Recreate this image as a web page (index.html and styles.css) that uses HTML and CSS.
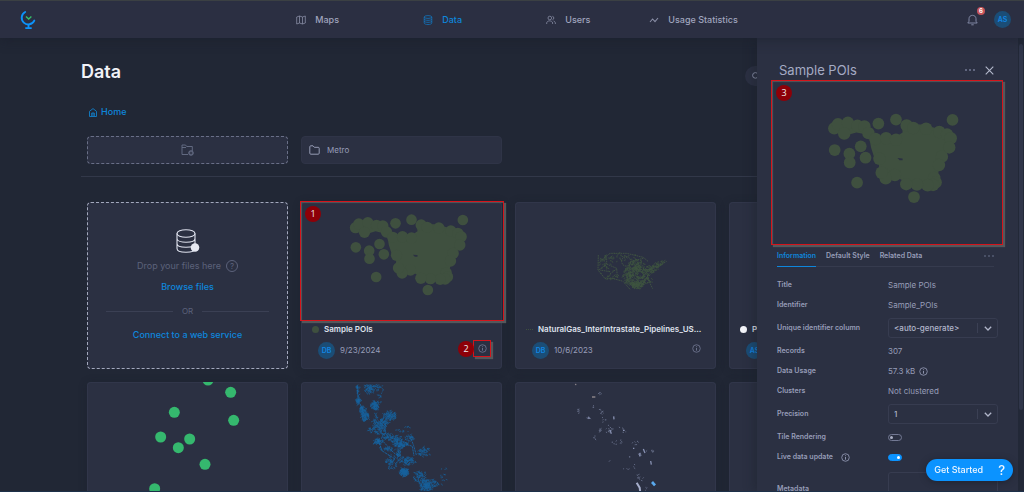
FILE: index.html
```html
<!DOCTYPE html>
<html lang="en">
<head>
<meta charset="utf-8">
<title>Data</title>
<link rel="stylesheet" href="styles.css">
</head>
<body>
<svg class="defs" aria-hidden="true">
  <defs>
    <symbol id="info" viewBox="0 0 10 10"><circle cx="5" cy="5" r="4.2" fill="none" stroke="currentColor" stroke-width=".9"/><path d="M5 4.4V7.4M5 2.6V3.5" stroke="currentColor" stroke-width="1"/></symbol>
    <g id="pois">
      <path d="M180 108L195 95L262 100L284 124L296 134L348 136L366 124L364 106L380 100L430 104L466 116L490 126L500 140L496 165L478 190L468 213L462 240L455 275L375 270L362 252L345 248L318 255L300 235L302 212L288 190L280 165L276 142L258 128L240 124L206 134L180 120ZM352 194L358 200L366 200L366 195Z" fill-rule="evenodd"/>
      <circle cx="180" cy="113" r="17"/><circle cx="190" cy="102" r="17"/><circle cx="217" cy="98" r="17"/><circle cx="207" cy="127" r="17"/><circle cx="243" cy="106" r="17"/><circle cx="262" cy="108" r="17"/><circle cx="273" cy="126" r="17"/><circle cx="252" cy="162" r="16"/><circle cx="265" cy="193" r="16"/><circle cx="292" cy="142" r="17"/><circle cx="321" cy="140" r="17"/><circle cx="348" cy="144" r="17"/><circle cx="377" cy="105" r="17"/><circle cx="395" cy="112" r="17"/><circle cx="430" cy="114" r="17"/><circle cx="466" cy="123" r="17"/><circle cx="487" cy="130" r="17"/><circle cx="497" cy="140" r="17"/><circle cx="493" cy="165" r="17"/><circle cx="473" cy="190" r="17"/><circle cx="465" cy="213" r="17"/><circle cx="452" cy="248" r="17"/><circle cx="456" cy="260" r="17"/><circle cx="449" cy="267" r="17"/><circle cx="434" cy="268" r="17"/><circle cx="405" cy="266" r="17"/><circle cx="376" cy="265" r="17"/><circle cx="345" cy="240" r="17"/><circle cx="320" cy="249" r="17"/><circle cx="309" cy="234" r="17"/><circle cx="303" cy="196" r="17"/>
      <circle cx="181" cy="172" r="16"/><circle cx="221" cy="182" r="16"/><circle cx="222" cy="206" r="16"/><circle cx="242" cy="261" r="16"/><circle cx="300" cy="100" r="16"/><circle cx="348" cy="89" r="16"/><circle cx="502" cy="90" r="16"/><circle cx="397" cy="300" r="16"/>
    </g>
  </defs>
</svg>

<header class="topbar">
  <a class="logo" href="#" aria-label="Start page">
    <svg width="16" height="20" viewBox="0 0 16 20" fill="none"><path d="M5.2 2A6.6 6.6 0 1 0 14.3 10.6" stroke="#0c93fb" stroke-width="1.9" stroke-linecap="round"/><path d="M8.5 14.5V18M5.3 18.2H11.7" stroke="#0c93fb" stroke-width="1.8"/><path d="M6 6.6L8.7 9L11.4 6.6" stroke="#35c06c" stroke-width="1.4"/></svg>
  </a>
  <nav class="nav">
    <a href="#"><svg class="nav-icon" viewBox="0 0 10 10"><path d="M.7 2L3.5 1L6.5 2L9.3 1V8L6.5 9L3.5 8L.7 9ZM3.5 1V8M6.5 2V9"/></svg>Maps</a>
    <a href="#" class="active"><svg class="nav-icon" viewBox="0 0 10 10"><ellipse cx="5" cy="2" rx="3.8" ry="1.4"/><path d="M1.2 2V8C1.2 10 8.8 10 8.8 8V2M1.2 4C1.2 5.8 8.8 5.8 8.8 4M1.2 6C1.2 7.8 8.8 7.8 8.8 6"/></svg>Data</a>
    <a href="#"><svg class="nav-icon" viewBox="0 0 10 10"><circle cx="3.8" cy="3" r="1.8"/><path d="M.7 9V8C.7 5.2 6.6 5.2 6.6 8V9M6.4 1.3C8.3 1.5 8.3 4.5 6.4 4.8M7.6 6C9 6.4 9.4 7.4 9.4 9"/></svg>Users</a>
    <a href="#"><svg class="nav-icon" viewBox="0 0 10 10"><path d="M1 7L3.6 4L6 6.6L9 3" stroke-width="1.1"/></svg>Usage Statistics</a>
  </nav>
  <button class="bell" aria-label="Notifications">
    <svg width="11" height="12" viewBox="0 0 11 12" fill="none" stroke="#8087a3"><path d="M.8 9H10.2L9 7.3V4.7C9 .2 2 .2 2 4.7V7.3ZM4.3 10.8H6.7"/></svg>
    <span class="count">6</span>
  </button>
  <button class="avatar">AS</button>
</header>

<main class="content">
  <div class="heading">
    <h1>Data</h1>
    <div class="search"><svg width="8" height="8" viewBox="0 0 8 8" fill="none" stroke="#8d93ac"><circle cx="3.4" cy="3.4" r="2.8"/><path d="M5.5 5.5L7.6 7.6"/></svg></div>
  </div>
  <a class="crumb" href="#"><svg width="8" height="9" viewBox="0 0 8 9" fill="none" stroke="#127fca" stroke-width=".9"><path d="M.5 3.3L4 .6L7.5 3.3V8.5H.5ZM2.7 8.5V5H5.3V8.5M4 5V8.5"/></svg>Home</a>
  <div class="grid folders">
    <button class="folder new" aria-label="New folder"><svg width="13" height="12" viewBox="0 0 13 12" fill="none" stroke="#686f88" stroke-width=".9"><path d="M7 10.5H1V1H4.5L5.7 2.5H11.3V7M1 3.5H5"/><circle cx="10" cy="9" r="2.3" fill="#555b72"/><path d="M10 7.8V10.2M8.8 9H11.2" stroke="#2b3042"/></svg></button>
    <button class="folder"><svg width="11" height="10" viewBox="0 0 11 10" fill="none" stroke="#969cb4"><path d="M.8 1.8Q.8.8 1.8.8H4L5.3 2.3H9.2Q10.2 2.3 10.2 3.3V8.2Q10.2 9.2 9.2 9.2H1.8Q.8 9.2.8 8.2Z"/></svg>Metro</button>
  </div>
  <hr>
  <div class="grid cards">
    <section class="drop">
      <svg width="24" height="24" viewBox="0 0 24 24" fill="none" stroke="#dfe2ee" stroke-width="1.1"><ellipse cx="10" cy="4.5" rx="9" ry="3.8"/><path d="M1 4.5V19.5C1 24.5 19 24.5 19 19.5V4.5M1 9.5C1 14.5 19 14.5 19 9.5M1 14.5C1 19.5 19 19.5 19 14.5"/><circle cx="19" cy="18.5" r="4.3" fill="#e6e8f2" stroke="none"/></svg>
      <p class="hint">Drop your files here <span class="help">?</span></p>
      <a href="#">Browse files</a>
      <div class="or">OR</div>
      <a href="#">Connect to a web service</a>
    </section>
    <article class="card">
      <div class="thumb marked"><svg viewBox="18 36 603 354"><use href="#pois" fill="#3f503f"/></svg><span class="step step-map">1</span></div>
      <h2><i class="dot olive"></i><span>Sample POIs</span></h2>
      <footer><span class="avatar">DB</span><time>9/23/2024</time>
        <button class="details marked-small" aria-label="Details"><svg width="9" height="9"><use href="#info"/></svg></button>
        <span class="step step-info">2</span></footer>
    </article>
    <article class="card">
      <div class="thumb"><svg viewBox="15 36 603 354" id="pipelines"></svg></div>
      <h2><i class="dash"></i><span>NaturalGas_InterIntrastate_Pipelines_US...</span></h2>
      <footer><span class="avatar">DB</span><time>10/6/2023</time><button class="details" aria-label="Details"><svg width="9" height="9"><use href="#info"/></svg></button></footer>
    </article>
    <article class="card">
      <div class="thumb"></div>
      <h2><i class="dot white"></i><span>Points</span></h2>
      <footer><span class="avatar">AS</span></footer>
    </article>
    <article class="card"><div class="thumb"><svg viewBox="52 276 603 354" fill="#35b86e"><circle cx="415" cy="270" r="16.5"/><circle cx="483" cy="307" r="16.5"/><circle cx="314" cy="367" r="16.5"/><circle cx="492" cy="391" r="16.5"/><circle cx="273" cy="441" r="16.5"/><circle cx="360" cy="447" r="16.5"/><circle cx="326" cy="473" r="16.5"/><circle cx="406" cy="523" r="16.5"/><circle cx="255" cy="596" r="16.5"/></svg></div></article>
    <article class="card"><div class="thumb"><svg viewBox="18 21 603 354" id="roads"></svg></div></article>
    <article class="card"><div class="thumb"><svg viewBox="15 21 603 354" id="parcels"></svg></div></article>
    <article class="card"><div class="thumb"></div></article>
  </div>
</main>

<aside class="panel">
  <div class="panel-head"><h2>Sample POIs</h2>
    <button class="more" aria-label="More"><i></i><i></i><i></i></button>
    <button aria-label="Close"><svg width="9" height="9" viewBox="0 0 9 9" stroke="#b4b9cc" stroke-width="1.1"><path d="M.7.7L8.3 8.3M8.3.7L.7 8.3"/></svg></button></div>
  <div class="preview"><svg viewBox="11 -16 625 444"><use href="#pois" fill="#3f503f"/></svg><span class="step step-panel">3</span></div>
  <div class="tabs"><button class="active">Information</button><button>Default Style</button><button>Related Data</button><button class="more dim" aria-label="More tabs"><i></i><i></i><i></i></button></div>
  <form class="props">
    <span>Title</span><span>Sample POIs</span>
    <span>Identifier</span><span>Sample_POIs</span>
    <label for="uid">Unique identifier column</label><div class="pick"><select id="uid"><option>&lt;auto-generate&gt;</option></select><svg width="8" height="5" viewBox="0 0 8 5"><path d="M.8.8L4 4L7.2.8"/></svg></div>
    <span>Records</span><span>307</span>
    <span>Data Usage</span><span class="usage">57.3 kB <svg class="tip" width="9" height="9"><use href="#info"/></svg></span>
    <span>Clusters</span><span>Not clustered</span>
    <label for="precision">Precision</label><div class="pick"><select id="precision"><option>1</option></select><svg width="8" height="5" viewBox="0 0 8 5"><path d="M.8.8L4 4L7.2.8"/></svg></div>
    <label for="tile">Tile Rendering</label><input id="tile" type="checkbox">
    <label for="live">Live data update <svg class="tip" width="9" height="9"><use href="#info"/></svg></label><input id="live" type="checkbox" checked>
    <label for="meta">Metadata</label><textarea id="meta"></textarea>
  </form>
  <div class="scroll"></div>
</aside>
<button class="start">Get Started <b>?</b></button>
<script src="maps.js"></script>
</body>
</html>
```
FILE: styles.css
```css
* { box-sizing: border-box; }
body { margin: 0; height: 100vh; overflow: hidden; background: #212735; color: #979db8; font: 9px/16px Inter, "Open Sans", sans-serif; position: relative; }
body::after { content: ""; position: fixed; z-index: 9; left: 0; right: 0; bottom: 0; height: 1px; background: #1d3049; }
button { font: inherit; color: inherit; background: none; border: 0; padding: 0; cursor: pointer; }
a { color: #0e86dc; text-decoration: none; }
h1, h2, p { margin: 0; }
svg { display: block; flex: none; }
.defs { position: absolute; width: 0; height: 0; }

.topbar { position: relative; z-index: 4; display: flex; align-items: center; height: 38px; padding: 0 13px 0 20px; background: #2b2f42; border-top: 1px solid #3b4043; box-shadow: 0 2px 12px #181d2988; }
.nav { flex: 1; display: grid; grid-template-columns: 127px 123px 103px auto; justify-content: center; padding-left: 31px; }
.nav a { display: flex; align-items: center; gap: 9px; color: #a0a5be; font-weight: 500; }
.nav a.active { color: #0e86dc; }
.nav-icon { width: 10px; height: 10px; fill: none; stroke: currentColor; stroke-width: .8; opacity: .8; }
.bell { position: relative; margin-right: 16px; }
.count { position: absolute; left: 10px; top: -7px; width: 8px; height: 8px; border-radius: 50%; background: #c65359; color: #fff; font-size: 6px; line-height: 8px; font-weight: 700; }
.avatar { flex: none; width: 17px; height: 17px; border-radius: 50%; background: #1b4d76; color: #1186e3; font-size: 7px; line-height: 17px; font-weight: 600; text-align: center; }

.content { height: calc(100vh - 38px); overflow: hidden; padding: 22px 94px 0 81px; }
.heading { display: flex; justify-content: space-between; align-items: center; height: 24px; }
h1 { color: #f1f2f7; font-size: 18px; line-height: 24px; font-weight: 600; }
.search { width: 185px; height: 20px; margin-top: 8px; padding: 6px 7px; border-radius: 10px; background: #2b3042; }
.crumb { display: flex; align-items: center; gap: 4px; margin: 20px 0 16px 8px; font-weight: 500; }
.grid { display: grid; grid-template-columns: repeat(4, minmax(0, 1fr)); gap: 13px; padding-left: 6px; }
.folder { display: flex; align-items: center; gap: 7px; height: 28px; padding: 0 7px; border: 1px solid #2f3447; border-radius: 4px; background: #2b3042; font-size: 8px; }
.folder.new { justify-content: center; border: 1px dashed #696f87; }
hr { margin: 12px 0 25px; border: 0; border-top: 1px solid #323849; }

.drop { display: flex; flex-direction: column; align-items: center; padding: 26px 18px 0; border: 1px dashed #a3a8bd; border-radius: 4px; background: #2b3042; font-weight: 500; }
.hint { display: flex; align-items: center; gap: 5px; margin: 5px 0; color: #5c627b; font-weight: 400; }
.help { width: 12px; height: 12px; border: 1px solid #5c627b; border-radius: 50%; line-height: 10px; text-align: center; font-size: 8px; }
.or { display: flex; align-items: center; gap: 9px; align-self: stretch; margin: 8px 0; color: #5c627b; font-size: 8px; font-weight: 400; }
.or::before, .or::after { content: ""; flex: 1; border-top: 1px solid #3b4054; }
.card { min-height: 167px; border-radius: 4px; background: #2b3042; box-shadow: inset 0 0 0 1px #31364a, 0 1px 8px #181d2955; }
.thumb { position: relative; height: 118px; overflow: hidden; }
.thumb svg { width: 100%; height: 100%; }
.thumb.marked { height: 120px; margin: -1px -2px -1px -1px; }
.card h2 { display: flex; align-items: center; gap: 5px; height: 18px; padding: 0 10px 0 11px; color: #dfe1ec; font-size: 8px; line-height: 16px; font-weight: 600; }
.card h2 span { white-space: nowrap; }
.dot { flex: none; width: 7px; height: 7px; border-radius: 50%; }
.olive { background: #3f503f; }
.white { background: #f4f5fa; }
.dash { flex: none; width: 7px; border-top: 1px dotted #3f503f; }
.card footer { position: relative; display: flex; align-items: center; gap: 5px; height: 24px; padding: 0 9px 0 17px; font-size: 8px; }
.details { display: flex; align-items: center; justify-content: center; width: 18px; height: 17px; margin: 0 2px 3px auto; color: #737994; }
.marked, .preview { border: 1px solid #d5141b; box-shadow: 2px 2px 1px #55575b, inset 1px 1px 1px #55575b; }
.marked-small { border: 1px solid #d5141b; box-shadow: 2px 2px 1px #55575b; }
.step { position: absolute; width: 16px; height: 16px; border-radius: 50%; background: #8d0008; color: #eee; font: 9px/16px "Open Sans", sans-serif; text-align: center; }
.step-map { left: 4px; top: 4px; }
.step-info { right: 28px; top: 3px; }
.step-panel { left: 4px; top: 4px; }

.panel { position: absolute; z-index: 3; top: 38px; right: 0; bottom: 0; width: 267px; padding: 22px 26px 0 20px; overflow: hidden; background: #2b3042; box-shadow: -3px 0 10px #181d2966; }
.panel-head { display: flex; align-items: center; gap: 10px; height: 20px; padding: 0 4px 0 2px; }
.panel-head h2 { flex: 1; color: #a5abc4; font-size: 13px; line-height: 20px; font-weight: 400; }
.more { display: flex; gap: 2px; }
.more i { width: 2px; height: 2px; border-radius: 50%; background: #737994; }
.preview { position: relative; height: 165px; margin: 0 -5px 0 -6px; }
.preview svg { width: 100%; height: 100%; }
.tabs { display: flex; gap: 10px; height: 22px; margin: 0 4px 8px 0; border-bottom: 1px solid #363b4e; font-size: 7px; font-weight: 600; }
.tabs .active { color: #0e86dc; border-bottom: 1px solid #0e86dc; height: 22px; }
.tabs .more { margin-left: auto; align-items: center; }
.dim i { background: #555b73; }
.props { display: grid; grid-template-columns: 111px minmax(0, 1fr); grid-auto-rows: minmax(20px, auto); align-items: center; font-size: 8px; line-height: 20px; }
.props > :nth-child(odd) { font-size: 7px; font-weight: 600; }
.props span, .props label { display: flex; align-items: center; gap: 8px; }
.props .usage { gap: 4px; }
.tip { color: #979db8; }
.pick { position: relative; margin: 3px 0; }
.pick select { display: block; appearance: none; width: 100%; height: 20px; padding: 0 5px; border: 1px solid #373c50; border-radius: 3px; background: #2b3042; color: #b1b6ca; font: 500 8px Inter, sans-serif; }
.pick svg { position: absolute; right: 6px; top: 8px; fill: none; stroke: #b1b6ca; stroke-width: 1.3; }
.pick::after { content: ""; position: absolute; right: 20px; top: 5px; height: 10px; border-left: 1px solid #3b4054; }
.props input { appearance: none; width: 14px; height: 7px; margin: 0; padding: 1px; border: 1px solid #737994; border-radius: 4px; }
.props input::before { content: ""; display: block; width: 3px; height: 3px; border-radius: 50%; background: #aaafc3; }
.props input:checked { background: #0b93ff; border-color: #0b93ff; }
.props input:checked::before { margin-left: 7px; background: #fff; }
.props label[for="meta"] { align-self: start; margin-top: 12px; }
.props textarea { width: 100%; height: 44px; margin-top: 5px; border: 1px solid #373c50; border-radius: 3px; background: none; resize: none; }
.scroll { position: absolute; top: 0; right: 0; bottom: 0; width: 6px; background: #222837; }
.scroll::before { content: ""; position: absolute; left: 1px; right: 1px; top: 6px; height: 366px; border-radius: 2px; background: #30364a; }
.start { position: fixed; z-index: 5; right: 11px; bottom: 11px; display: flex; align-items: center; gap: 15px; height: 22px; padding: 0 8px; border-radius: 11px; background: #0b93ff; color: #eef6ff; font-size: 9px; font-weight: 500; box-shadow: 0 1px 6px #181d29aa; }
.start b { font-size: 13px; font-weight: 500; }
```
FILE: maps.js
```js
// Seeded generator keeps the thumbnails the same on every load.
function rng(seed) {
  return function () {
    seed = (seed * 1664525 + 1013904223) >>> 0;
    return seed / 4294967296;
  };
}

// Scatters short strokes round each cluster: [x, y, rx, ry, count].
function scatter(id, seed, clusters, color, width, length) {
  const next = rng(seed);
  let d = "";
  for (const [cx, cy, rx, ry, count] of clusters) {
    for (let i = 0; i < count; i++) {
      const a = next() * Math.PI * 2, r = Math.pow(next(), 0.7);
      const x = cx + Math.cos(a) * r * rx, y = cy + Math.sin(a) * r * ry;
      const dx = (next() - 0.5) * length, dy = (next() - 0.5) * length;
      d += `M${x.toFixed(1)} ${y.toFixed(1)}l${dx.toFixed(1)} ${dy.toFixed(1)}`;
    }
  }
  document.getElementById(id).insertAdjacentHTML("beforeend",
    `<path d="${d}" fill="none" stroke="${color}" stroke-width="${width}" stroke-linecap="round"/>`);
}

function outline(id, d, color, width, dash) {
  document.getElementById(id).insertAdjacentHTML("beforeend",
    `<path d="${d}" fill="none" stroke="${color}" stroke-width="${width}" stroke-dasharray="${dash}"/>`);
}

outline("pipelines", "M265 195L264 240L285 266L310 266L340 274M270 214L300 190L350 190L400 202L414 214M266 240L290 222L290 200M290 222L320 235L322 262M300 252L322 235M335 214C335 195 362 195 362 214S335 233 335 214M362 214L400 205M410 240L440 232L470 214M412 255L420 280L428 296M410 262L400 285M360 298L340 275M300 245L270 240", "#3f5143", 3, "5 2");
scatter("pipelines", 7, [[380,230,24,22,120],[362,258,24,28,140],[380,284,22,13,120],[425,237,20,12,50],[445,225,16,9,25],[460,217,10,6,6],[400,258,16,24,60],[330,205,62,16,36],[290,228,25,32,22],[415,270,14,22,15],[310,262,30,9,18]], "#3d543f", 2.4, 8);

scatter("roads", 21, [[189,45,5,22,20],[190,78,7,12,40],[225,42,18,14,75],[250,36,14,10,18],[240,92,11,14,100],[202,104,10,12,60],[210,122,12,16,100],[255,62,10,28,14],[285,122,20,15,90],[268,138,18,14,50],[255,158,22,20,120],[240,132,8,20,25],[228,165,10,8,15],[250,198,15,10,65],[280,185,18,14,55],[304,195,20,16,70],[318,208,20,9,90],[345,190,14,12,30],[275,222,28,9,30],[290,262,18,24,60],[311,232,4,20,30],[335,258,28,12,90],[328,292,14,13,160],[388,232,20,15,55],[375,305,20,18,75],[392,332,18,18,130],[410,328,22,18,70],[445,302,14,30,12],[325,172,28,22,14]], "#17619c", 2, 9);
outline("roads", "M249 195L262 228L300 252M265 200L295 232L311 245M300 212L315 215L316 244M335 208L352 214L357 243M186 34L190 78L205 105M345 183L356 212L364 240", "#1768a8", 2.5, "7 2");

scatter("parcels", 5, [[270,55,5,4,5],[205,108,4,14,7],[236,128,7,5,6],[273,110,9,8,7],[282,130,12,12,5],[271,167,4,9,8],[297,165,12,15,13],[258,188,7,7,4],[320,200,22,11,8],[340,160,12,16,5],[380,205,14,12,6],[390,238,5,9,5],[416,230,14,10,6],[360,275,30,12,6],[393,305,12,16,9],[405,340,6,6,3],[250,92,3,12,3],[300,258,3,3,1],[360,246,3,3,2]], "#626a84", 3, 4);
outline("parcels", "M195 28L199 29M246 66L256 66", "#8a8388", 4, "none");
outline("parcels", "M311 124L312 133M233 128L239 130M339 166L344 166M400 222L405 234M390 234L389 244M422 258L424 269M371 218V222M300 165L304 176", "#8790b1", 4, "none");
outline("parcels", "M380 323L389 338L391 353", "#a6aecb", 6, "none");
outline("parcels", "M426 321L435 331", "#5aa9ee", 8, "none");
```
